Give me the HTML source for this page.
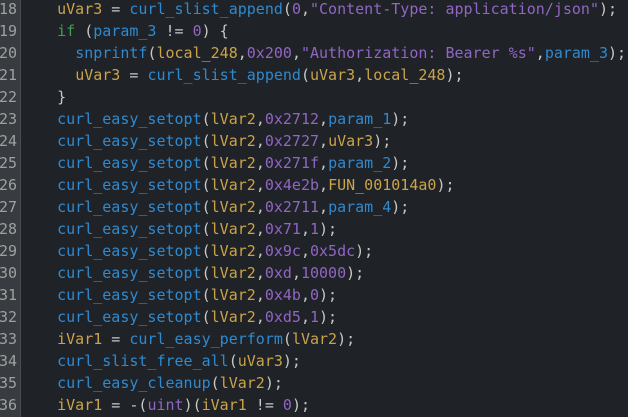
<!DOCTYPE html>
<html><head><meta charset="utf-8"><style>
body{margin:0;width:628px;height:417px;overflow:hidden;background:#1f2226;}
.g{position:absolute;left:0;top:0;width:20px;height:417px;background:#383b40;border-right:1px solid #4a4d52;}
.c{position:absolute;left:0;top:-2px;font:15px/22px "DejaVu Sans Mono","Liberation Mono",monospace;color:#c8c8c8;white-space:pre;}
.n{display:inline-block;width:17px;text-align:right;color:#a0a0a0;margin-right:4px;overflow:visible;direction:rtl}
.y{color:#cba44a}.b{color:#2f8ad0}.p{color:#9166c4}.k{color:#3ea24a}
</style></head><body><div class="g"></div><div class="c"><span class="n">18</span>    <span class="y">uVar3</span> = <span class="b">curl_slist_append</span>(<span class="p">0</span>,<span class="p">"Content-Type: application/json"</span>);
<span class="n">19</span>    <span class="k">if</span> (<span class="b">param_3</span> != <span class="p">0</span>) {
<span class="n">20</span>      <span class="b">snprintf</span>(<span class="y">local_248</span>,<span class="p">0x200</span>,<span class="p">"Authorization: Bearer %s"</span>,<span class="b">param_3</span>);
<span class="n">21</span>      <span class="y">uVar3</span> = <span class="b">curl_slist_append</span>(<span class="y">uVar3</span>,<span class="y">local_248</span>);
<span class="n">22</span>    }
<span class="n">23</span>    <span class="b">curl_easy_setopt</span>(<span class="y">lVar2</span>,<span class="p">0x2712</span>,<span class="b">param_1</span>);
<span class="n">24</span>    <span class="b">curl_easy_setopt</span>(<span class="y">lVar2</span>,<span class="p">0x2727</span>,<span class="y">uVar3</span>);
<span class="n">25</span>    <span class="b">curl_easy_setopt</span>(<span class="y">lVar2</span>,<span class="p">0x271f</span>,<span class="b">param_2</span>);
<span class="n">26</span>    <span class="b">curl_easy_setopt</span>(<span class="y">lVar2</span>,<span class="p">0x4e2b</span>,<span class="y">FUN_001014a0</span>);
<span class="n">27</span>    <span class="b">curl_easy_setopt</span>(<span class="y">lVar2</span>,<span class="p">0x2711</span>,<span class="b">param_4</span>);
<span class="n">28</span>    <span class="b">curl_easy_setopt</span>(<span class="y">lVar2</span>,<span class="p">0x71</span>,<span class="p">1</span>);
<span class="n">29</span>    <span class="b">curl_easy_setopt</span>(<span class="y">lVar2</span>,<span class="p">0x9c</span>,<span class="p">0x5dc</span>);
<span class="n">30</span>    <span class="b">curl_easy_setopt</span>(<span class="y">lVar2</span>,<span class="p">0xd</span>,<span class="p">10000</span>);
<span class="n">31</span>    <span class="b">curl_easy_setopt</span>(<span class="y">lVar2</span>,<span class="p">0x4b</span>,<span class="p">0</span>);
<span class="n">32</span>    <span class="b">curl_easy_setopt</span>(<span class="y">lVar2</span>,<span class="p">0xd5</span>,<span class="p">1</span>);
<span class="n">33</span>    <span class="y">iVar1</span> = <span class="b">curl_easy_perform</span>(<span class="y">lVar2</span>);
<span class="n">34</span>    <span class="b">curl_slist_free_all</span>(<span class="y">uVar3</span>);
<span class="n">35</span>    <span class="b">curl_easy_cleanup</span>(<span class="y">lVar2</span>);
<span class="n">36</span>    <span class="y">iVar1</span> = -(<span class="p">uint</span>)(<span class="y">iVar1</span> != <span class="p">0</span>);</div></body></html>
